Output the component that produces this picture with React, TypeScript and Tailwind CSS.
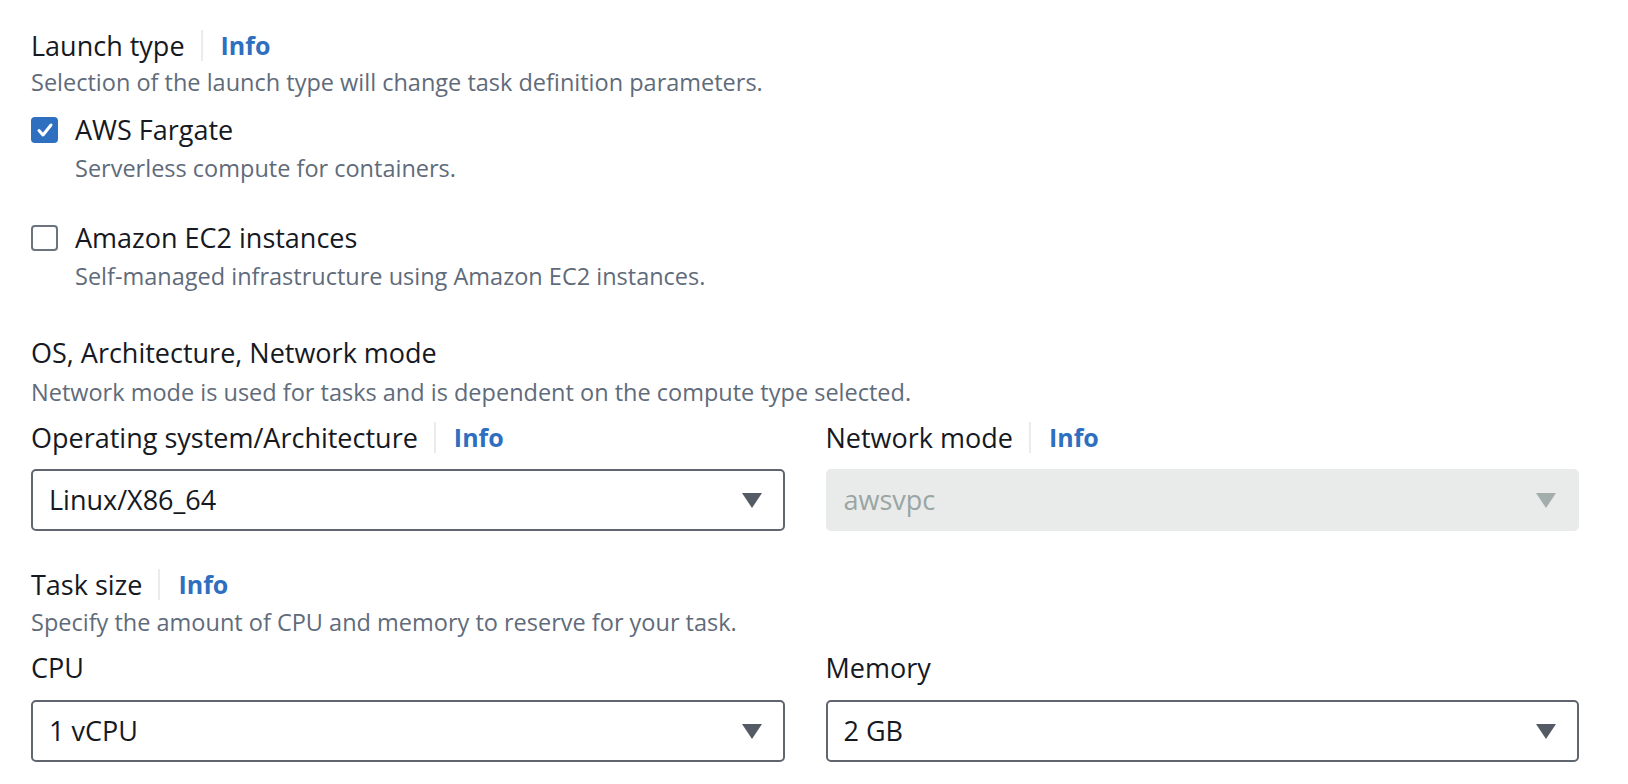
import { ReactNode } from "react";

function InfoLabel({ children }: { children: ReactNode }) {
  return (
    <div className="flex items-center leading-[37px] text-[27px] text-[#16191f]">
      <span>{children}</span>
      <span className="ml-[16px] mr-[18px] h-[31px] w-[2px] bg-[#e9ebed]" />
      <span className="text-[25px] font-bold text-[#2e6fbf]">Info</span>
    </div>
  );
}

function Caret({ color }: { color: string }) {
  return (
    <svg width="20" height="15" viewBox="0 0 20 15">
      <polygon points="0,0 20,0 10,15" fill={color} />
    </svg>
  );
}

function Select({ value, disabled }: { value: string; disabled?: boolean }) {
  return disabled ? (
    <div className="flex h-[62px] items-center justify-between rounded-[5px] bg-[#e9ebea] pl-[18px] pr-[23px] text-[27px] text-[#9aa5a3]">
      <span>{value}</span>
      <Caret color="#a3adab" />
    </div>
  ) : (
    <div className="flex h-[62px] items-center justify-between rounded-[5px] border-2 border-[#5f6670] pl-[16px] pr-[21px] text-[27px] text-[#16191f]">
      <span>{value}</span>
      <Caret color="#545b64" />
    </div>
  );
}

function Check({ checked, label, desc }: { checked?: boolean; label: string; desc: string }) {
  return (
    <div>
      <div className="flex items-center">
        {checked ? (
          <span className="flex h-[26px] w-[27px] items-center justify-center rounded-[4px] bg-[#2f6fc0]">
            <svg width="18" height="16" viewBox="0 0 18 16">
              <path d="M3 8.5 L7 13 L15 3" fill="none" stroke="white" strokeWidth="3" strokeLinecap="round" strokeLinejoin="round" />
            </svg>
          </span>
        ) : (
          <span className="h-[26px] w-[27px] rounded-[4px] border-2 border-[#6b737d] bg-white" />
        )}
        <span className="ml-[17px] text-[27px] leading-[37px] text-[#16191f]">{label}</span>
      </div>
      <p className="ml-[44px] mt-[2px] text-[23.5px] leading-[37px] text-[#5f6b7a]">{desc}</p>
    </div>
  );
}

export default function App() {
  return (
    <div className="min-h-[784px] bg-white pl-[31px] pr-[49px] pt-[27px] font-['Open_Sans',sans-serif]">
      {/* Launch type */}
      <InfoLabel>Launch type</InfoLabel>
      <p className="text-[23.5px] leading-[37px] text-[#5f6b7a]">
        Selection of the launch type will change task definition parameters.
      </p>
      <div className="mt-[10px]">
        <Check checked label="AWS Fargate" desc="Serverless compute for containers." />
      </div>
      <div className="mt-[32px]">
        <Check label="Amazon EC2 instances" desc="Self-managed infrastructure using Amazon EC2 instances." />
      </div>

      {/* OS, Architecture, Network mode */}
      <h2 className="mt-[39px] text-[27px] leading-[37px] text-[#16191f]">OS, Architecture, Network mode</h2>
      <p className="mt-[3px] text-[23.5px] leading-[37px] text-[#5f6b7a]">
        Network mode is used for tasks and is dependent on the compute type selected.
      </p>
      <div className="mt-[8px] grid grid-cols-2 gap-[41px]">
        <div>
          <InfoLabel>Operating system/Architecture</InfoLabel>
          <div className="mt-[13px]">
            <Select value="Linux/X86_64" />
          </div>
        </div>
        <div>
          <InfoLabel>Network mode</InfoLabel>
          <div className="mt-[13px]">
            <Select value="awsvpc" disabled />
          </div>
        </div>
      </div>

      {/* Task size */}
      <div className="mt-[35px]">
        <InfoLabel>Task size</InfoLabel>
      </div>
      <p className="mt-[1px] text-[23.5px] leading-[37px] text-[#5f6b7a]">
        Specify the amount of CPU and memory to reserve for your task.
      </p>
      <div className="mt-[8px] grid grid-cols-2 gap-[41px]">
        <div>
          <div className="text-[27px] leading-[37px] text-[#16191f]">CPU</div>
          <div className="mt-[14px]">
            <Select value="1 vCPU" />
          </div>
        </div>
        <div>
          <div className="text-[27px] leading-[37px] text-[#16191f]">Memory</div>
          <div className="mt-[14px]">
            <Select value="2 GB" />
          </div>
        </div>
      </div>
    </div>
  );
}
